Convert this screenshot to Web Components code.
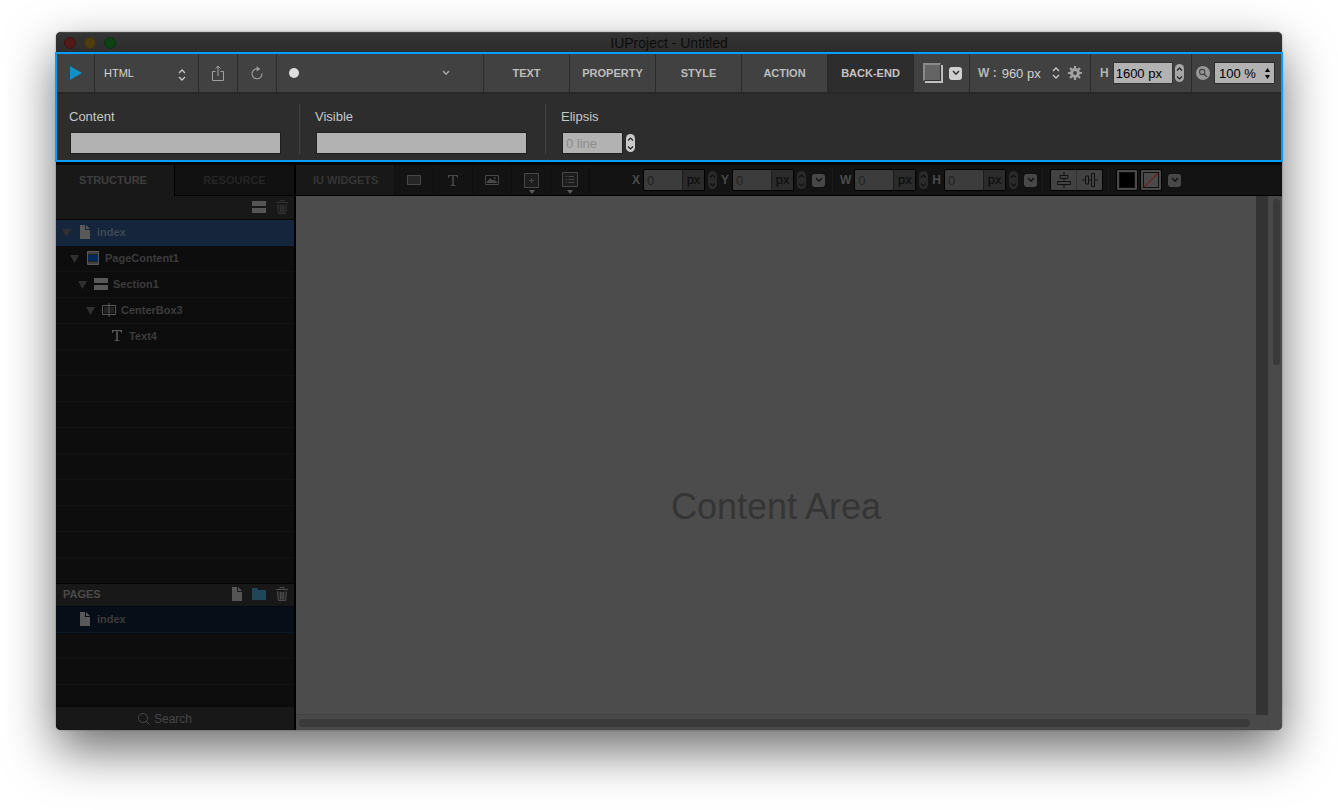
<!DOCTYPE html>
<html lang="en">
<head>
<meta charset="utf-8">
<title>IUProject - Untitled</title>
<style>
  body { margin: 0; background: #fff; font-family: "Liberation Sans", Arial, sans-serif; }
</style>
</head>
<body>
<iu-window></iu-window>
<script>
const BASE = `
  *, *::before, *::after { box-sizing: border-box; }
  :host { box-sizing: border-box; }
  button, input, select { font: inherit; color: inherit; margin: 0; padding: 0; border: 0; background: none; border-radius: 0; appearance: none; outline: none; }
  button { display: flex; align-items: center; justify-content: center; }
`;

// Registers an element whose shadow root is built from a css string and a markup function.
function define(name, css, markup) {
  customElements.define(name, class extends HTMLElement {
    connectedCallback() {
      if (this.shadowRoot) return;
      this.attachShadow({ mode: "open" }).innerHTML = `<style>${BASE}${css}</style>${markup(this)}`;
    }
  });
}
const attr = (el, name, fallback = "") => el.getAttribute(name) ?? fallback;

const ICONS = {
  play: [12, 14, `<path d="M0 0L12 7L0 14Z" fill="currentColor"/>`],
  share: [12, 16, `<path d="M3.5 6.5H.5V15.5H11.5V6.5H8.5M6 11V1M3.5 3.5L6 1L8.5 3.5" fill="none" stroke="currentColor"/>`],
  reload: [12, 14, `<path d="M7 2.9A5 5 0 1 0 11 7.6" fill="none" stroke="currentColor" stroke-width="1.1"/><path d="M5.6 .2L9.4 2.9L5.6 5.4Z" fill="currentColor"/>`],
  updown: [8, 12, `<path d="M1 4L4 1L7 4M1 8L4 11L7 8" fill="none" stroke="currentColor" stroke-width="1.3"/>`],
  updownSolid: [5, 11, `<path d="M0 4L2.5 0L5 4ZM0 7L2.5 11L5 7Z" fill="currentColor"/>`],
  chevron: [8, 6, `<path d="M1 1L4 4.2L7 1" fill="none" stroke="currentColor" stroke-width="1.5"/>`],
  up: [7, 4, `<path d="M1 3.5L3.5 1L6 3.5" fill="none" stroke="currentColor" stroke-width="1.2"/>`],
  down: [7, 4, `<path d="M1 .5L3.5 3L6 .5" fill="none" stroke="currentColor" stroke-width="1.2"/>`],
  gear: [14, 14, `<g fill="none" stroke="currentColor"><circle cx="7" cy="7" r="3.4" stroke-width="3"/><path stroke-width="2.2" d="M7 0V3M7 11V14M0 7H3M11 7H14M2 2L4 4M10 10L12 12M12 2L10 4M4 10L2 12"/></g>`],
  magnifier: [14, 14, `<circle cx="7" cy="7" r="7" fill="currentColor"/><circle cx="6.2" cy="6" r="2.6" fill="none" stroke="#414141" stroke-width="1.1"/><path d="M8 8L10.8 10.8" stroke="#414141" stroke-width="1.4"/>`],
  search: [12, 12, `<circle cx="5" cy="5" r="4.5" fill="none" stroke="currentColor"/><path d="M8.2 8.2L11.7 11.7" stroke="currentColor"/>`],
  section: [14, 12, `<path d="M0 0H14V5H0ZM0 7H14V12H0Z" fill="currentColor"/>`],
  trash: [12, 14, `<g fill="none" stroke="currentColor"><path d="M0 2.5H12M4 2V.5H8V2M1.5 4.5L2.3 13.5H9.7L10.5 4.5M4.5 5V12.5M6 5V12.5M7.5 5V12.5"/></g><path d="M1.5 4.5H10.5L9.7 13.5H2.3Z" fill="currentColor" opacity=".35"/>`],
  page: [10, 14, `<path d="M0 0H5V5H10V14H0Z" fill="currentColor"/><path d="M6 0L10 4H6Z" fill="currentColor"/>`],
  folder: [14, 12, `<path d="M0 0H5L6.5 2H14V12H0Z" fill="currentColor"/>`],
  pagebox: [12, 14, `<path d="M.5 .5H11.5V13.5H.5Z" fill="#262626" stroke="currentColor"/><path d="M1 1H11V3H1ZM1 11H11V13H1Z" fill="currentColor" opacity=".5"/><path d="M1 4H11V10H1Z" fill="#00295a"/>`],
  centerbox: [14, 14, `<path d="M.5 2.5H13.5V11.5H.5Z" fill="none" stroke="currentColor"/><path d="M2 4H12V10H2Z" fill="#222"/><path d="M7 0V14" stroke="currentColor"/>`],
  text: [10, 11, `<path d="M0 0H10V3H9.3C9 1.4 8.4 1 7 1H5.8V9.2C5.8 9.9 6.3 10.2 7.6 10.3V11H2.4V10.3C3.7 10.2 4.2 9.9 4.2 9.2V1H3C1.6 1 1 1.4 .7 3H0Z" fill="currentColor"/>`],
  rect: [14, 10, `<path d="M.5 .5H13.5V9.5H.5Z" fill="#141414" stroke="currentColor"/><path d="M1 1H13V9H1Z" fill="#262626"/>`],
  image: [14, 10, `<path d="M.5 .5H13.5V9.5H.5Z" fill="none" stroke="currentColor"/><path d="M2 8V6.5L5.5 3L7.5 5.5L9 4.5L12 7V8Z" fill="currentColor"/><circle cx="9.7" cy="3" r=".9" fill="currentColor"/>`],
  addbox: [15, 22, `<path d="M.5 1.5H14.5V15.5H.5Z" fill="#1d1d1d" stroke="currentColor"/><path d="M7.5 6V11M5 8.5H10" stroke="currentColor"/><path d="M5 18H11L8 22Z" fill="#5c5c5c"/>`],
  listbox: [16, 22, `<path d="M.5 .5H15.5V14.5H.5Z" fill="#1d1d1d" stroke="currentColor"/><path d="M4 4.5H5M6.5 4.5H12M4 7.5H5M6.5 7.5H12M4 10.5H5M6.5 10.5H12" stroke="currentColor"/><path d="M5 18H11L8 22Z" fill="#5c5c5c"/>`],
  alignH: [14, 16, `<g fill="none" stroke="currentColor"><path d="M7 0V3M7 7V10M7 13V16"/><path d="M3 3.5H11V6.5H3ZM.5 9.5H13.5V12.5H.5Z"/></g>`],
  alignV: [16, 14, `<g fill="none" stroke="currentColor"><path d="M0 7H3M7 7H9M13 7H16"/><path d="M3.5 3H6.5V11H3.5ZM9.5 .5H12.5V13.5H9.5Z"/></g>`],
  triangle: [9, 8, `<path d="M0 0H9L4.5 8Z" fill="currentColor"/>`]
};

define("iu-icon", `
  :host { display: inline-flex; flex: none; }
  svg { display: block; }
`, el => {
  const [w, h, body] = ICONS[attr(el, "name")];
  return `<svg width="${w}" height="${h}" viewBox="0 0 ${w} ${h}" aria-hidden="true">${body}</svg>`;
});

define("iu-stepper", `
  :host { display: inline-flex; flex-direction: column; flex: none; width: 9px; height: 18px; border-radius: 5px; background: var(--step-bg, #b8b8b8); color: var(--step-fg, #222); }
  button { flex: 1; width: 9px; }
`, () => `<button type="button" aria-label="Increase"><iu-icon name="up"></iu-icon></button>
<button type="button" aria-label="Decrease"><iu-icon name="down"></iu-icon></button>`);

define("iu-drop", `
  :host { display: inline-flex; flex: none; }
  button { width: 13px; height: 13px; border-radius: 3px; background: var(--drop-bg, #484848); color: var(--drop-fg, #141414); }
`, () => `<button type="button" aria-label="More options"><iu-icon name="chevron"></iu-icon></button>`);

define("iu-tab", `
  :host { display: flex; flex: none; width: 86px; border-left: 1px solid #2b2b2b; }
  button { flex: 1; font-size: 11px; font-weight: bold; color: #bdbdbd; }
  :host([selected]) button { background: #2d2d2d; color: #c4c4c4; }
`, () => `<button type="button"><slot></slot></button>`);

define("iu-toolbar", `
  :host { display: flex; height: 38px; background: #414141; color: #d0d0d0; font-size: 13px; }
  .cell { display: flex; align-items: center; flex: none; border-left: 1px solid #2b2b2b; }
  .play { width: 37px; border: 0; justify-content: center; color: #128fc6; }
  .target { position: relative; width: 104px; }
  .target select { width: 100%; height: 100%; padding-left: 9px; font-size: 11px; color: #d6d6d6; }
  .mark { position: absolute; pointer-events: none; right: 12px; top: 15px; display: flex; color: #c8c8c8; }
  .tool { width: 39px; justify-content: center; color: #a0a0a0; }
  .tool button { width: 100%; height: 100%; }
  .state { flex: 1; min-width: 60px; }
  .state button { width: 100%; height: 100%; justify-content: space-between; padding: 0 33px 0 12px; color: #a5a5a5; }
  .dot { width: 10px; height: 10px; border-radius: 50%; background: #dedede; }
  .swatch { width: 56px; padding-left: 9px; gap: 8px; --drop-bg: #d0d0d0; --drop-fg: #333; }
  .chip { width: 18px; height: 18px; margin-bottom: 2px; background: #646464; border: solid; border-width: 2px 1px 1px 2px; border-color: #8a8a8a #333 #333 #8a8a8a; box-shadow: 2px 2px 0 #c0c0c0; }
  .width { width: 121px; padding-left: 8px; gap: 5px; }
  .pick { position: relative; display: flex; align-items: center; }
  .pick select { width: 58px; height: 20px; }
  .pick .mark { right: 0; top: 4px; }
  label { font-size: 12px; font-weight: bold; color: #b4b4b4; }
  .gear { margin-left: 3px; color: #a2a2a2; }
  .height { width: 101px; padding-left: 9px; gap: 4px; }
  .height input { width: 60px; height: 22px; padding-left: 2px; background: #b2b2b2; color: #000; border: 1px solid #333; }
  .height iu-stepper { --step-bg: #a6a6a6; margin-left: -2px; }
  .zoom { width: 90px; padding-left: 4px; gap: 4px; color: #979797; }
  .zoom .pick { height: 22px; background: #b2b2b2; border: 1px solid #2b2b2b; color: #000; }
  .zoom select { width: 59px; padding-left: 4px; }
  .zoom .mark { right: 4px; top: 5px; color: #000; }
`, () => `
<div class="cell play"><button type="button" aria-label="Run"><iu-icon name="play"></iu-icon></button></div>
<div class="cell target"><select aria-label="Target"><option>HTML</option></select><span class="mark"><iu-icon name="updown"></iu-icon></span></div>
<div class="cell tool"><button type="button" aria-label="Share"><iu-icon name="share"></iu-icon></button></div>
<div class="cell tool"><button type="button" aria-label="Reload"><iu-icon name="reload"></iu-icon></button></div>
<div class="cell state"><button type="button" aria-label="State"><span class="dot"></span><iu-icon name="chevron"></iu-icon></button></div>
<iu-tab>TEXT</iu-tab><iu-tab>PROPERTY</iu-tab><iu-tab>STYLE</iu-tab><iu-tab>ACTION</iu-tab><iu-tab selected>BACK-END</iu-tab>
<div class="cell swatch"><button type="button" class="chip" aria-label="Background"></button><iu-drop></iu-drop></div>
<div class="cell width"><label for="w">W :</label><span class="pick"><select id="w"><option>960 px</option></select><span class="mark"><iu-icon name="updown"></iu-icon></span></span><button type="button" class="gear" aria-label="Settings"><iu-icon name="gear"></iu-icon></button></div>
<div class="cell height"><label for="h">H</label><input id="h" value="1600 px"><iu-stepper></iu-stepper></div>
<div class="cell zoom"><iu-icon name="magnifier"></iu-icon><span class="pick"><select aria-label="Zoom"><option>100 %</option></select><span class="mark"><iu-icon name="updownSolid"></iu-icon></span></span></div>`);

define("iu-field", `
  :host { display: flex; flex-direction: column; flex: none; width: 246px; height: 50px; padding: 5px 0 0 15px; border-left: 1px solid #434343; color: #c8c8c8; }
  :host([first]) { border-left: 0; width: 242px; padding-left: 12px; }
  label { font-size: 13px; line-height: 16px; }
  .row { display: flex; align-items: center; gap: 3px; margin: 7px 0 0 1px; --step-bg: #cacaca; }
  input { height: 22px; width: 211px; background: #b2b2b2; border: 1px solid #1f1f1f; color: #222; font-size: 13px; padding-left: 3px; }
  :host([short]) input { width: 61px; }
  input::placeholder { color: #8c8c8c; opacity: 1; }
`, el => `<label for="f">${attr(el, "label")}</label><div class="row"><input id="f" placeholder="${attr(el, "hint")}"><slot></slot></div>`);

define("iu-inspector", `
  :host { display: block; margin: 0 -1px; border: 2px solid #069dfd; background: #2d2d2d; position: relative; }
  .panel { display: flex; height: 68px; border-top: 2px solid #282828; padding-top: 10px; }
`, () => `<iu-toolbar></iu-toolbar>
<div class="panel"><iu-field first label="Content"></iu-field><iu-field label="Visible"></iu-field><iu-field short label="Elipsis" hint="0 line"><iu-stepper></iu-stepper></iu-field></div>`);

define("iu-row", `
  :host { display: flex; align-items: center; height: 26px; padding: 0 0 2px 6px; border-bottom: 1px solid #131313; font-size: 11px; font-weight: bold; color: #3c3c3c; }
  :host([selected]) { background: #14253c; border-bottom-color: #162944; color: #3b4755; }
  :host([current]) { background: #070e17; border-bottom-color: #0d1825; }
  .tri { width: 9px; margin-right: 7px; padding-top: 2px; color: #303030; }
  .glyph { width: 14px; display: flex; justify-content: center; margin-right: 5px; color: #595959; }
`, el => `<span style="width:${8 * attr(el, "level", 0)}px"></span>
<span class="tri">${el.hasAttribute("leaf") ? "" : `<iu-icon name="triangle"></iu-icon>`}</span>
<span class="glyph"><iu-icon name="${attr(el, "icon")}"></iu-icon></span><slot></slot>`);

define("iu-sidebar", `
  :host { display: flex; flex-direction: column; flex: none; width: 240px; background: #0d0d0d; border-right: 2px solid #000; border-bottom-left-radius: 5px; overflow: hidden; }
  .tabs { display: flex; height: 31px; }
  .tabs button { flex: 1; font-size: 11px; font-weight: bold; background: #111; color: #252525; border-left: 1px solid #000; border-bottom: 1px solid #000; }
  .tabs button:first-child { flex: none; width: 118px; background: #181818; color: #3f3f3f; padding: 0 4px 2px 0; border: 0; }
  .tools { display: flex; align-items: center; justify-content: flex-end; gap: 10px; height: 24px; padding: 0 6px 2px 0; background: #181818; border-bottom: 1px solid #080808; color: #303030; }
  button.lit { color: #555; }
  button.blue { color: #1f4759; }
  .list { flex: 1; min-height: 130px; background: repeating-linear-gradient(#0d0d0d 0 25px, #131313 25px 26px); }
  .pages { justify-content: flex-start; padding-left: 7px; border-top: 1px solid #050505; font-size: 11px; font-weight: bold; color: #4a4a4a; }
  h2 { margin: 0 auto 0 0; font: inherit; }
  .short { flex: none; height: 99px; min-height: 0; }
  .search { display: flex; align-items: center; justify-content: center; gap: 4px; height: 24px; background: #181818; border-top: 1px solid #0a0a0a; color: #474747; font-size: 12px; }
  .search input { width: 58px; color: #474747; }
  .search input::placeholder { color: #474747; opacity: 1; }
`, () => `
<div class="tabs"><button type="button">STRUCTURE</button><button type="button">RESOURCE</button></div>
<div class="tools"><button type="button" class="lit" aria-label="Add section"><iu-icon name="section"></iu-icon></button><button type="button" aria-label="Delete"><iu-icon name="trash"></iu-icon></button></div>
<div class="list">
<iu-row selected icon="page">index</iu-row>
<iu-row level="1" icon="pagebox">PageContent1</iu-row>
<iu-row level="2" icon="section">Section1</iu-row>
<iu-row level="3" icon="centerbox">CenterBox3</iu-row>
<iu-row level="4" leaf icon="text">Text4</iu-row>
</div>
<div class="tools pages"><h2>PAGES</h2><button type="button" class="lit" aria-label="New page"><iu-icon name="page"></iu-icon></button><button type="button" class="blue" aria-label="New folder"><iu-icon name="folder"></iu-icon></button><button type="button" aria-label="Delete page"><iu-icon name="trash"></iu-icon></button></div>
<div class="list short"><iu-row current leaf icon="page">index</iu-row></div>
<div class="search"><iu-icon name="search"></iu-icon><input aria-label="Search" placeholder="Search"></div>`);

define("iu-measure", `
  :host { display: flex; align-items: center; flex: none; gap: 3px; --step-bg: #2a2a2a; --step-fg: #111; }
  label { font-size: 12px; font-weight: bold; color: #4b4b4b; }
  .box { display: flex; width: 62px; height: 22px; border: 1px solid #000; border-radius: 2px; background: #3c3c3c; font-size: 13px; }
  input { width: 38px; padding-left: 3px; color: #222; }
  span { flex: 1; display: flex; align-items: center; justify-content: center; padding-bottom: 1px; background: #2b2b2b; border-left: 1px solid #1c1c1c; color: #0a0a0a; }
`, el => `<label for="m">${attr(el, "label")}</label><div class="box"><input id="m" value="0"><span>px</span></div><iu-stepper></iu-stepper>`);

define("iu-widgetbar", `
  :host { display: flex; align-items: center; height: 31px; background: #131313; border-bottom: 1px solid #000; color: #484848; }
  h2 { margin: 0; width: 98px; align-self: stretch; display: flex; align-items: center; padding-left: 17px; background: #181818; font-size: 11px; color: #363636; flex: none; }
  .tools { display: flex; align-self: stretch; border-right: 1px solid #0e0e0e; margin-right: 42px; }
  .tools button { width: 39px; border-left: 1px solid #0e0e0e; }
  .tools .low { padding-top: 6px; }
  .group { display: flex; align-items: center; flex: none; }
  .group > * + * { margin-left: 4px; }
  .group > iu-drop { margin-left: 6px; }
  .place { margin-right: 2px; }
  .rule { width: 1px; height: 24px; background: #1b1b1b; margin: 0 7px 0 5px; flex: none; }
  .align { display: flex; width: 53px; height: 22px; border: 1px solid #000; border-radius: 2px; background: #424242; color: #111; }
  .align button { flex: 1; }
  .align button + button { border-left: 1px solid #333; }
  .chip { width: 22px; height: 22px; background: #4a4a4a; border: 1px solid #000; border-radius: 2px; padding: 2px; }
  .chip i { display: block; width: 100%; height: 100%; border: 1px solid #111; }
  .fill i { background: #000; }
  .none i { background: linear-gradient(to bottom right, #4a4a4a calc(50% - 1px), #6a1d22 50%, #4a4a4a calc(50% + 1px)); }
  .group > .none { margin-left: 2px; }
`, () => `
<h2>IU WIDGETS</h2>
<div class="tools">
<button type="button" aria-label="Box"><iu-icon name="rect"></iu-icon></button>
<button type="button" aria-label="Text"><iu-icon name="text"></iu-icon></button>
<button type="button" aria-label="Image"><iu-icon name="image"></iu-icon></button>
<button type="button" class="low" aria-label="More widgets"><iu-icon name="addbox"></iu-icon></button>
<button type="button" class="low" aria-label="Lists"><iu-icon name="listbox"></iu-icon></button>
</div>
<div class="group place"><iu-measure label="X"></iu-measure><iu-measure label="Y"></iu-measure><iu-drop></iu-drop></div>
<span class="rule"></span>
<div class="group"><iu-measure label="W"></iu-measure><iu-measure label="H"></iu-measure><iu-drop></iu-drop></div>
<span class="rule"></span>
<div class="align"><button type="button" aria-label="Align center"><iu-icon name="alignH"></iu-icon></button><button type="button" aria-label="Align middle"><iu-icon name="alignV"></iu-icon></button></div>
<span class="rule"></span>
<div class="group"><button type="button" class="chip fill" aria-label="Fill"><i></i></button><button type="button" class="chip none" aria-label="Border"><i></i></button><iu-drop></iu-drop></div>`);

define("iu-canvas", `
  :host { flex: 1; display: grid; grid-template: 1fr 15px / 1fr 12px 14px; background: #494949; border-bottom-right-radius: 5px; }
  .sheet { display: grid; place-items: center; padding-top: 104px; background: #4c4c4c; border-bottom: 1px solid #424242; }
  p { margin: 0; font-size: 36px; color: #353535; }
  .edge { background: #333; }
  .v { grid-row: 1 / 3; grid-column: 3; padding: 3px 2px 0 4px; background: #4a4a4a; border-left: 1px solid #464646; border-bottom-right-radius: 5px; }
  .v i { display: block; height: 166px; border-radius: 4px; background: #3a3a3a; }
  .h { grid-column: 1 / 3; padding: 4px 18px 0 3px; }
  .h i { display: block; height: 8px; border-radius: 4px; background: #3a3a3a; }
`, () => `<div class="sheet"><p>Content Area</p></div><div class="edge"></div><div class="v"><i></i></div><div class="h"><i></i></div>`);

define("iu-window", `
  :host { display: flex; flex-direction: column; min-height: 100vh; padding: 32px 56px 80px; }
  .frame { flex: 1; display: flex; flex-direction: column; border-radius: 5px; background: #0a0a0a; box-shadow: 0 20px 50px rgba(0,0,0,.58), 0 0 2px rgba(0,0,0,.4); }
  header { display: grid; grid-template-columns: 1fr auto 1fr; align-items: center; height: 20px; padding: 1px 8px 0; border-radius: 5px 5px 0 0; background: linear-gradient(#343434, #2c2c2c); border-top: 1px solid #454545; }
  .lights { display: flex; gap: 8px; }
  .lights button { width: 12px; height: 12px; border-radius: 50%; border: 1px solid #401412; background: #501a19; }
  .lights button:nth-child(2) { background: #503c0f; border-color: #42310b; }
  .lights button:nth-child(3) { background: #0c4213; border-color: #0a3510; }
  h1 { margin: 0; font-size: 14px; line-height: 16px; font-weight: normal; color: #0c0c0c; }
  .work { flex: 1; display: flex; border-top: 3px solid #050505; }
  main { flex: 1; display: flex; flex-direction: column; min-width: 0; }
`, () => `<div class="frame">
<header><div class="lights"><button type="button" aria-label="Close"></button><button type="button" aria-label="Minimize"></button><button type="button" aria-label="Zoom"></button></div><h1>IUProject - Untitled</h1></header>
<iu-inspector></iu-inspector>
<div class="work"><iu-sidebar></iu-sidebar><main><iu-widgetbar></iu-widgetbar><iu-canvas></iu-canvas></main></div>
</div>`);
</script>
</body>
</html>
